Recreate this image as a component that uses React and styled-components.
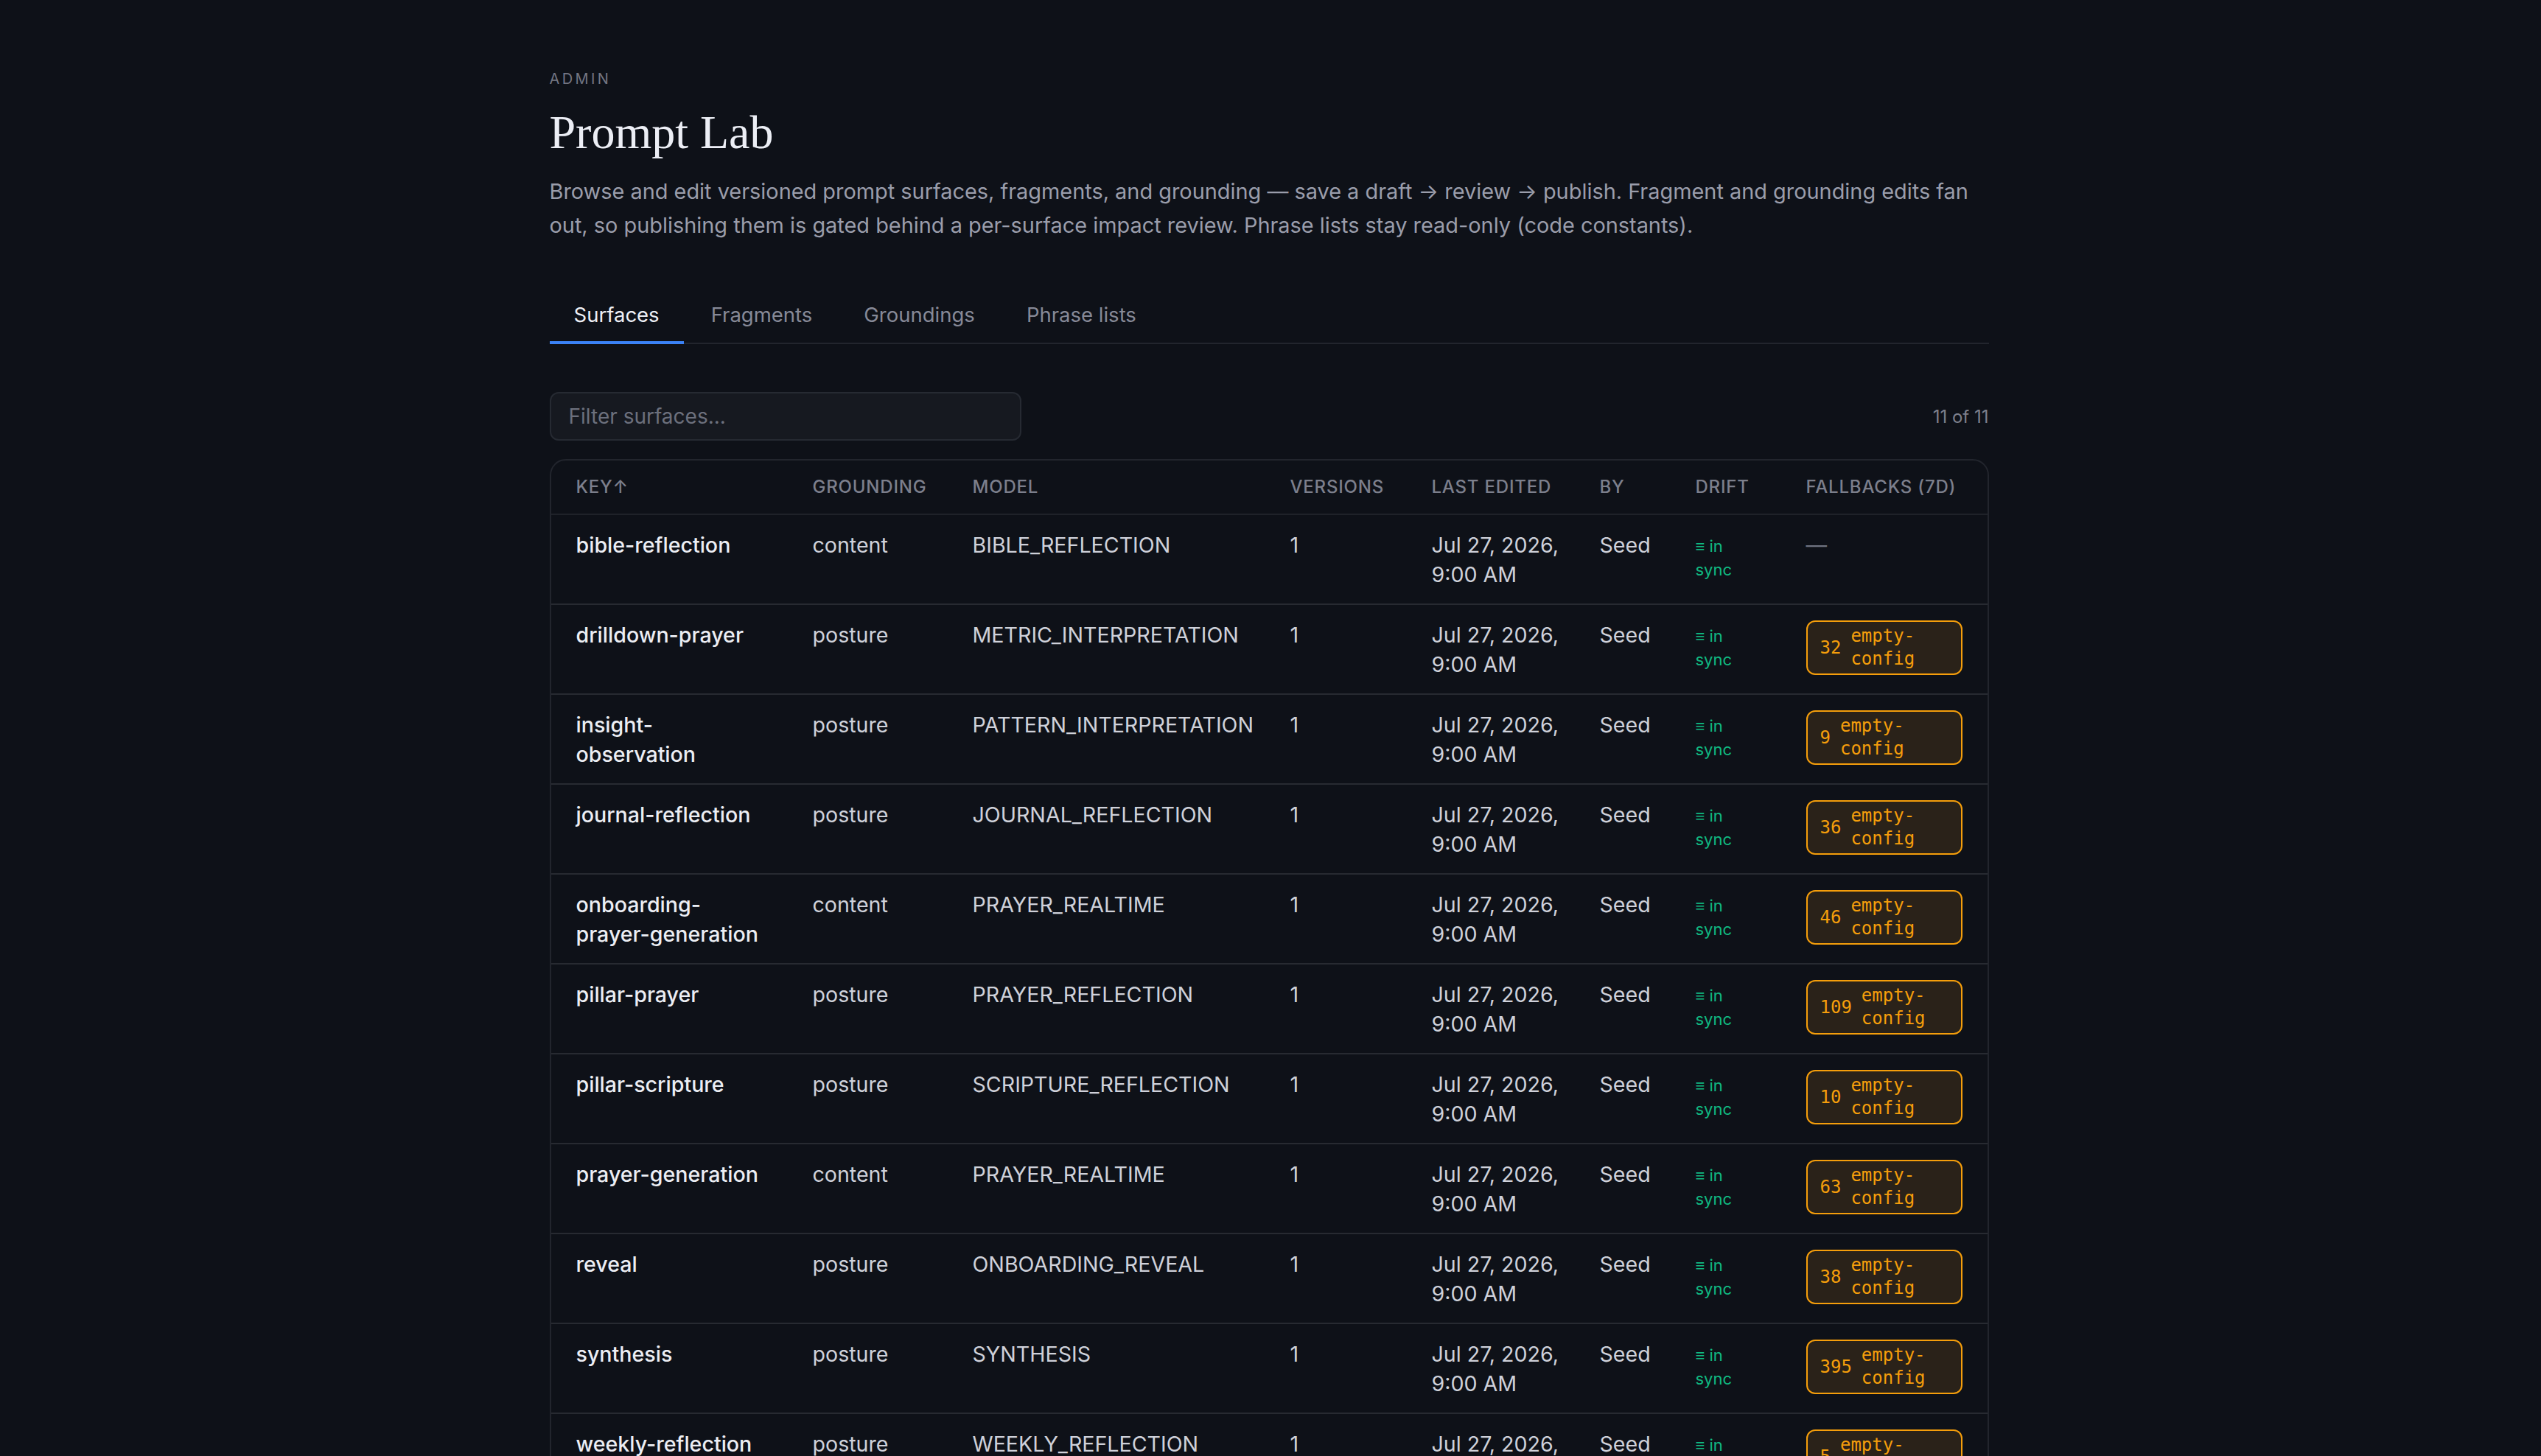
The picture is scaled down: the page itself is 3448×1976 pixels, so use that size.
import React from 'react';
import styled, { createGlobalStyle } from 'styled-components';

const GlobalStyle = createGlobalStyle`
  html, body {
    margin: 0;
    padding: 0;
    background: #0e1118;
  }
  body {
    font-family: Inter, "Noto Sans", sans-serif;
    color: #d0d2db;
  }
`;

const COLUMNS = '321px 217px 431px 192px 228px 130px 150px 1fr';

const Page = styled.main`
  padding: 93px 0 160px;
`;

const Wrap = styled.div`
  width: 1953px;
  margin: 0 auto;
  position: relative;
  left: -2px;
`;

const Eyebrow = styled.div`
  font-size: 20px;
  line-height: 28px;
  letter-spacing: 3.4px;
  text-transform: uppercase;
  color: #737683;
  margin-bottom: 21px;
`;

const Title = styled.h1`
  font-family: "Liberation Serif", serif;
  font-weight: 400;
  font-size: 64px;
  line-height: 76px;
  color: #eceef5;
  margin: 0 0 19px;
`;

const Lede = styled.p`
  font-size: 28.9px;
  line-height: 46px;
  color: #9a9dab;
  margin: 0;
`;

const TabBar = styled.nav`
  display: flex;
  gap: 4px;
  margin-top: 62px;
  border-bottom: 2px solid #22252d;
`;

const Tab = styled.button`
  background: none;
  border: 0;
  border-bottom: 4px solid ${p => (p.$active ? '#3b82f6' : 'transparent')};
  margin-bottom: -2px;
  padding: 16px 33px;
  font-family: inherit;
  font-size: 27.5px;
  line-height: 40px;
  color: ${p => (p.$active ? '#eef0f6' : '#868997')};
  cursor: pointer;
`;

const Toolbar = styled.div`
  display: flex;
  align-items: center;
  justify-content: space-between;
  margin-top: 65px;
`;

const FilterInput = styled.input`
  box-sizing: border-box;
  width: 640px;
  height: 66px;
  padding: 0 24px;
  background: #161920;
  border: 2px solid #262a32;
  border-radius: 12px;
  font-family: inherit;
  font-size: 28px;
  color: #d0d2db;
  outline: none;

  &::placeholder {
    color: #6c707d;
  }
`;

const Count = styled.span`
  font-size: 24px;
  color: #7d808d;
`;

const TableCard = styled.div`
  margin-top: 25px;
  border: 2px solid #22252d;
  border-radius: 22px;
  overflow: hidden;
`;

const HeadRow = styled.div`
  display: grid;
  grid-template-columns: ${COLUMNS};
  border-bottom: 2px solid #1f2229;
`;

const HeadCell = styled.div`
  padding: 20px 16px 20px 34px;
  font-size: 24px;
  line-height: 32px;
  font-weight: 500;
  letter-spacing: 0.8px;
  text-transform: uppercase;
  white-space: nowrap;
  color: #7c7f8c;
`;

const Row = styled.div`
  display: grid;
  grid-template-columns: ${COLUMNS};
  align-items: start;
  border-bottom: 2px solid #272a31;

  &:last-child {
    border-bottom: 0;
  }
`;

const Cell = styled.div`
  padding: 21px ${p => (p.$last ? '34px' : '16px')} 19px 34px;
  font-size: 28.6px;
  line-height: 40px;
  color: #cfd1da;
  min-width: 0;
`;

const KeyName = styled.span`
  display: block;
  max-width: 250px;
  font-weight: 500;
  color: #eceef4;
`;

const ModelName = styled.span`
  white-space: nowrap;
`;

const DriftTag = styled.span`
  display: inline-block;
  max-width: 80px;
  margin-top: 5px;
  font-size: 22px;
  line-height: 32px;
  color: #10b981;
`;

const EmptyMark = styled.span`
  color: #6e7280;
`;

const Badge = styled.span`
  display: inline-flex;
  align-items: center;
  gap: 13px;
  box-sizing: border-box;
  max-width: 100%;
  padding: 4px 16px 4px 17px;
  border: 2px solid #f59e0b;
  border-radius: 12px;
  background: #2a2219;
  font-family: "DejaVu Sans Mono", "Liberation Mono", monospace;
  font-size: 24px;
  line-height: 31px;
  color: #f59e0b;
`;

const BadgeCount = styled.span`
  flex-shrink: 0;
`;

const BadgeLabel = styled.span`
  min-width: 0;
`;

const columns = ['Key↑', 'Grounding', 'Model', 'Versions', 'Last edited', 'By', 'Drift', 'Fallbacks (7d)'];

const surfaces = [
  { key: 'bible-reflection', grounding: 'content', model: 'BIBLE_REFLECTION', fallbacks: null },
  { key: 'drilldown-prayer', grounding: 'posture', model: 'METRIC_INTERPRETATION', fallbacks: 32 },
  { key: 'insight-observation', grounding: 'posture', model: 'PATTERN_INTERPRETATION', fallbacks: 9 },
  { key: 'journal-reflection', grounding: 'posture', model: 'JOURNAL_REFLECTION', fallbacks: 36 },
  { key: 'onboarding-prayer-generation', grounding: 'content', model: 'PRAYER_REALTIME', fallbacks: 46 },
  { key: 'pillar-prayer', grounding: 'posture', model: 'PRAYER_REFLECTION', fallbacks: 109 },
  { key: 'pillar-scripture', grounding: 'posture', model: 'SCRIPTURE_REFLECTION', fallbacks: 10 },
  { key: 'prayer-generation', grounding: 'content', model: 'PRAYER_REALTIME', fallbacks: 63 },
  { key: 'reveal', grounding: 'posture', model: 'ONBOARDING_REVEAL', fallbacks: 38 },
  { key: 'synthesis', grounding: 'posture', model: 'SYNTHESIS', fallbacks: 395 },
  { key: 'weekly-reflection', grounding: 'posture', model: 'WEEKLY_REFLECTION', fallbacks: 5 },
];

const tabs = ['Surfaces', 'Fragments', 'Groundings', 'Phrase lists'];

function SurfaceRow({ surface }) {
  return (
    <Row>
      <Cell><KeyName>{surface.key}</KeyName></Cell>
      <Cell>{surface.grounding}</Cell>
      <Cell><ModelName>{surface.model}</ModelName></Cell>
      <Cell>1</Cell>
      <Cell>Jul 27, 2026, 9:00 AM</Cell>
      <Cell>Seed</Cell>
      <Cell><DriftTag>≡ in sync</DriftTag></Cell>
      <Cell $last>
        {surface.fallbacks == null ? (
          <EmptyMark>—</EmptyMark>
        ) : (
          <Badge>
            <BadgeCount>{surface.fallbacks}</BadgeCount>
            <BadgeLabel>empty-config</BadgeLabel>
          </Badge>
        )}
      </Cell>
    </Row>
  );
}

export default function App() {
  return (
    <Page>
      <GlobalStyle />
      <Wrap>
        <Eyebrow>Admin</Eyebrow>
        <Title>Prompt Lab</Title>
        <Lede>
          Browse and edit versioned prompt surfaces, fragments, and grounding — save a draft → review → publish.
          Fragment and grounding edits fan out, so publishing them is gated behind a per-surface impact review.
          Phrase lists stay read-only (code constants).
        </Lede>

        <TabBar>
          {tabs.map((t, i) => (
            <Tab key={t} $active={i === 0}>{t}</Tab>
          ))}
        </TabBar>

        <Toolbar>
          <FilterInput placeholder="Filter surfaces..." />
          <Count>11 of 11</Count>
        </Toolbar>

        <TableCard>
          <HeadRow>
            {columns.map(c => (
              <HeadCell key={c}>{c}</HeadCell>
            ))}
          </HeadRow>
          {surfaces.map(s => (
            <SurfaceRow key={s.key} surface={s} />
          ))}
        </TableCard>
      </Wrap>
    </Page>
  );
}
